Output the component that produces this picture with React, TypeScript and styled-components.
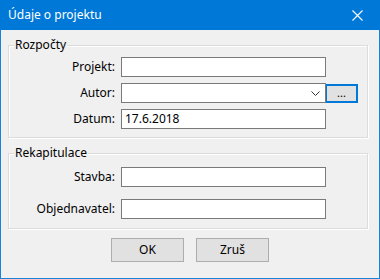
import { FunctionComponent } from "react";
import styled, { createGlobalStyle } from "styled-components";

const GlobalStyle = createGlobalStyle`
  html, body {
    margin: 0;
    padding: 0;
    background: #ffffff;
  }
  body {
    font-family: "Segoe UI", "Noto Sans", "Liberation Sans", sans-serif;
    font-size: 12px;
    color: #000000;
  }
`;

const Window = styled.div`
  width: 380px;
  height: 279px;
  box-sizing: border-box;
  display: flex;
  flex-direction: column;
  background: #f0f0f0;
  border: 1px solid #1883d7;
  border-top: none;
`;

const TitleBar = styled.div`
  height: 30px;
  margin: 0 -1px;
  display: flex;
  align-items: center;
  justify-content: space-between;
  background: #0078d7;
  color: #ffffff;
  padding: 0 0 0 8px;
  flex-shrink: 0;
`;

const Title = styled.span`
  font-size: 12px;
  line-height: 16px;
  padding-bottom: 1px;
`;

const CloseButton = styled.div`
  width: 46px;
  height: 30px;
  display: flex;
  align-items: center;
  justify-content: center;
`;

const Body = styled.div`
  flex: 1;
  display: flex;
  flex-direction: column;
  padding: 15px 11px 0 7px;
`;

const Group = styled.div<{ $top: number; $bottom: number; $gap: number }>`
  position: relative;
  border: 1px solid #dcdcdc;
  box-shadow: inset 1px 1px 0 #ffffff, 1px 1px 0 #ffffff;
  padding: ${(p) => p.$top}px 0 ${(p) => p.$bottom}px 0;
  display: grid;
  grid-template-columns: 106px 205px 33px;
  column-gap: 6px;
  row-gap: ${(p) => p.$gap}px;
  align-items: center;
  & + & {
    margin-top: 15px;
  }
`;

const Legend = styled.span`
  position: absolute;
  left: 5px;
  top: -9px;
  padding: 0 1px;
  background: #f0f0f0;
  line-height: 16px;
`;

const Label = styled.label`
  text-align: right;
  line-height: 16px;
  white-space: nowrap;
`;

const Field = styled.div<{ $h: number }>`
  position: relative;
  height: ${(p) => p.$h}px;
  box-sizing: border-box;
  border: 1px solid #7a7a7a;
  background: #ffffff;
  display: flex;
  align-items: center;
  padding: 0 3px;
  line-height: 16px;
  grid-column: 2;
`;

const Chevron = styled.svg`
  position: absolute;
  right: 5px;
  top: 7px;
`;

const BrowseButton = styled.div`
  width: 33px;
  height: 19px;
  justify-self: start;
  margin-left: -7px;
  box-sizing: border-box;
  border: 2px solid #0078d7;
  background: #e1e1e1;
  display: flex;
  align-items: center;
  justify-content: center;
  font-size: 11px;
  line-height: 10px;
`;

const ButtonRow = styled.div`
  display: flex;
  justify-content: center;
  gap: 12px;
  margin-top: 9px;
  padding-left: 4px;
`;

const PushButton = styled.div`
  width: 73px;
  height: 24px;
  box-sizing: border-box;
  border: 1px solid #adadad;
  background: #e1e1e1;
  display: flex;
  align-items: center;
  justify-content: center;
  line-height: 16px;
`;

const App: FunctionComponent = () => {
  return (
    <>
      <GlobalStyle />
      <Window>
        <TitleBar>
          <Title>Údaje o projektu</Title>
          <CloseButton>
            <svg width="11" height="11" viewBox="0 0 11 11">
              <path
                d="M0.5 0.5 L10.5 10.5 M10.5 0.5 L0.5 10.5"
                stroke="#ffffff"
                strokeWidth="1.1"
                fill="none"
              />
            </svg>
          </CloseButton>
        </TitleBar>
        <Body>
          <Group $top={11} $bottom={8} $gap={6}>
            <Legend>Rozpočty</Legend>
            <Label>Projekt:</Label>
            <Field $h={20} />
            <span />
            <Label>Autor:</Label>
            <Field $h={20}>
              <Chevron width="9" height="5" viewBox="0 0 9 5">
                <path d="M0.5 0.5 L4.5 4.5 L8.5 0.5" stroke="#333" fill="none" />
              </Chevron>
            </Field>
            <BrowseButton>...</BrowseButton>
            <Label>Datum:</Label>
            <Field $h={20}>17.6.2018</Field>
            <span />
          </Group>
          <Group $top={13} $bottom={9} $gap={12}>
            <Legend>Rekapitulace</Legend>
            <Label>Stavba:</Label>
            <Field $h={20} />
            <span />
            <Label>Objednavatel:</Label>
            <Field $h={20} />
            <span />
          </Group>
          <ButtonRow>
            <PushButton>OK</PushButton>
            <PushButton>Zruš</PushButton>
          </ButtonRow>
        </Body>
      </Window>
    </>
  );
};

export default App;
